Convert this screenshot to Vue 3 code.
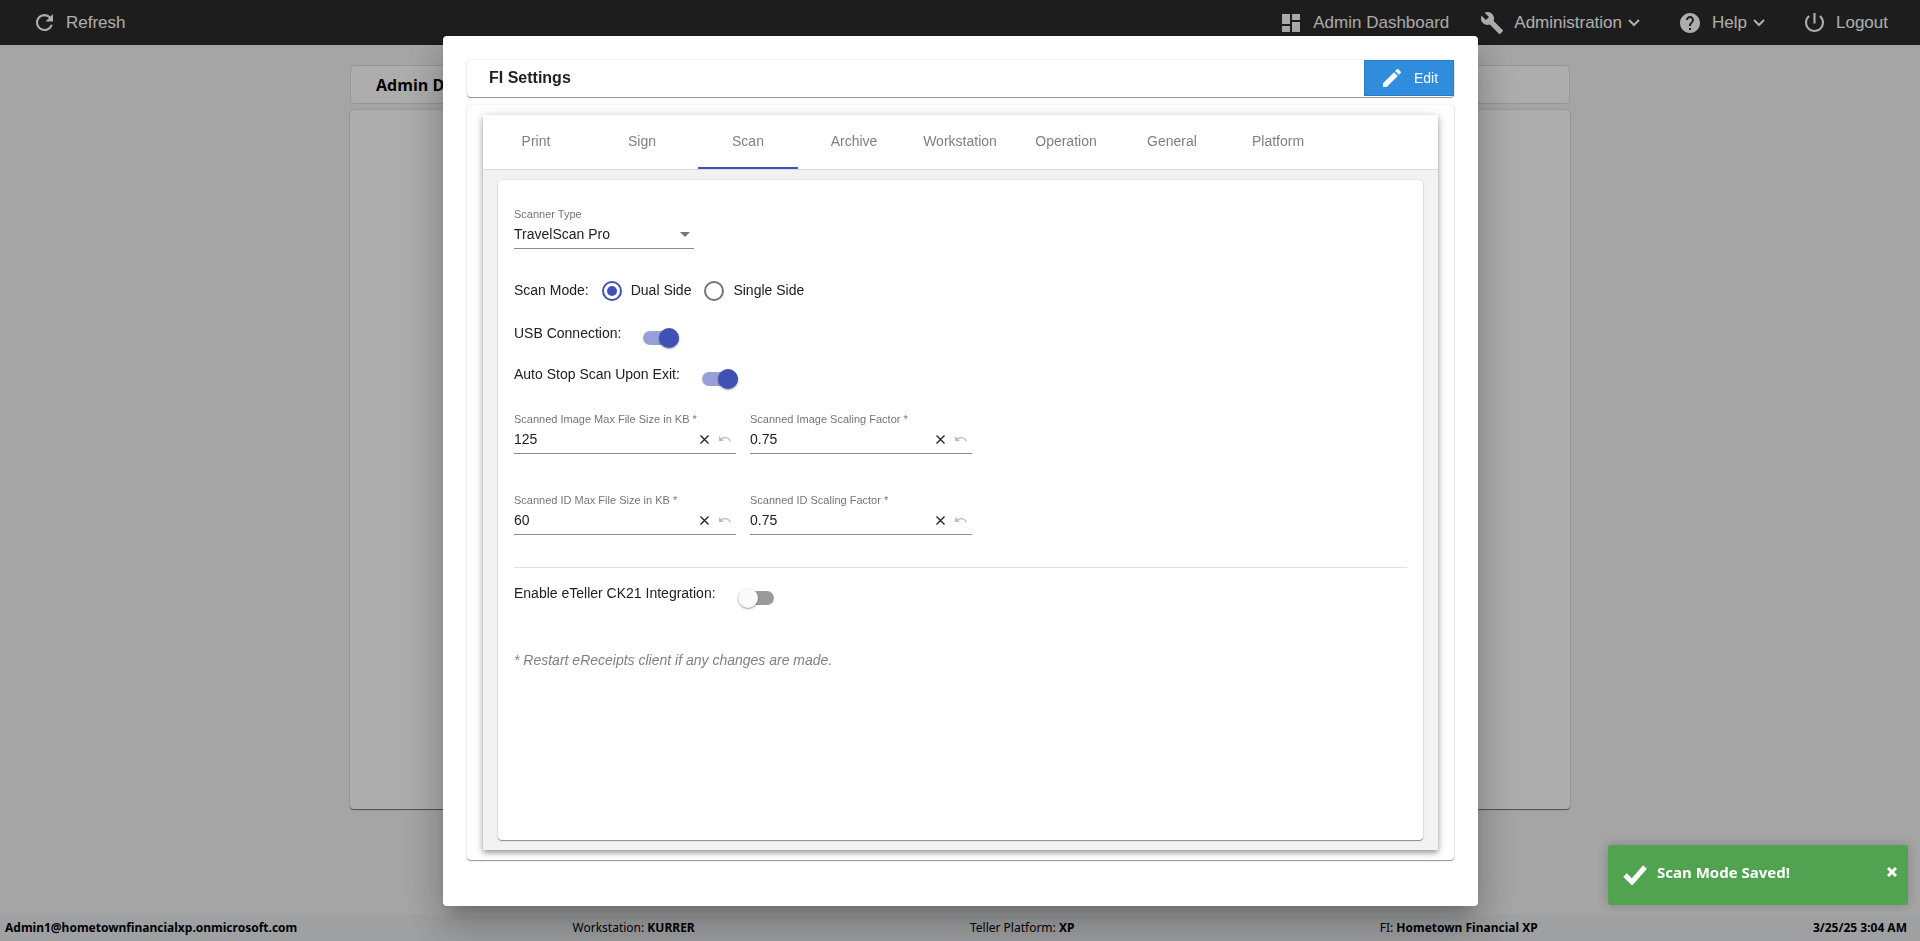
<template>
  <div class="page">
    <header class="topbar">
      <a href="#" class="nav-link">
        <svg class="ico-refresh" viewBox="4 4 16 16"><path d="M17.65 6.35C16.2 4.9 14.21 4 12 4c-4.42 0-7.99 3.58-7.99 8s3.57 8 7.99 8c3.73 0 6.84-2.55 7.73-6h-2.08c-.82 2.33-3.04 4-5.65 4-3.31 0-6-2.69-6-6s2.69-6 6-6c1.66 0 3.14.69 4.22 1.78L13 11h7V4l-2.35 2.35z" /></svg>
        Refresh
      </a>
      <nav class="nav-right">
        <a href="#" class="nav-link dashboard">
          <svg class="ico-dash" viewBox="3 3 18 18"><path d="M3 13h8V3H3v10zm0 8h8v-6H3v6zm10 0h8V11h-8v10zm0-18v6h8V3h-8z" /></svg>
          Admin Dashboard
        </a>
        <a href="#" class="nav-link administration">
          <svg class="ico-wrench" viewBox="1 1 22 22"><path d="M22.7 19l-9.1-9.1c.9-2.3.4-5-1.5-6.9-2-2-5-2.4-7.4-1.3L9 6 6 9 1.6 4.7C.4 7.1.9 10.1 2.9 12.1c1.9 1.9 4.6 2.4 6.9 1.5l9.1 9.1c.4.4 1 .4 1.4 0l2.3-2.3c.5-.4.5-1.1.1-1.4z" /></svg>
          Administration
          <svg class="ico-chevron" viewBox="0 0 12 8"><path d="M1 1l5 5 5-5" /></svg>
        </a>
        <a href="#" class="nav-link help">
          <svg class="ico-help" viewBox="2 2 20 20"><path d="M12 2C6.48 2 2 6.48 2 12s4.48 10 10 10 10-4.48 10-10S17.52 2 12 2zm1 17h-2v-2h2v2zm2.07-7.75l-.9.92C13.45 12.9 13 13.5 13 15h-2v-.5c0-1.1.45-2.1 1.17-2.83l1.24-1.26c.37-.36.59-.86.59-1.41 0-1.1-.9-2-2-2s-2 .9-2 2H8c0-2.21 1.79-4 4-4s4 1.79 4 4c0 .88-.36 1.68-.93 2.25z" /></svg>
          Help
          <svg class="ico-chevron" viewBox="0 0 12 8"><path d="M1 1l5 5 5-5" /></svg>
        </a>
        <a href="#" class="nav-link logout">
          <svg class="ico-power" viewBox="3 3 18 18"><path d="M13 3h-2v10h2V3zm4.83 2.17l-1.42 1.42C17.99 7.86 19 9.81 19 12c0 3.87-3.13 7-7 7s-7-3.13-7-7c0-2.19 1.01-4.14 2.58-5.42L6.17 5.17C4.23 6.82 3 9.26 3 12c0 4.97 4.03 9 9 9s9-4.03 9-9c0-2.74-1.23-5.18-3.17-6.83z" /></svg>
          Logout
        </a>
      </nav>
    </header>

    <main class="content">
      <h1 class="page-title">Admin Dashboard</h1>
      <section class="page-card"></section>
    </main>

    <footer class="statusbar">
      <span><b>Admin1@hometownfinancialxp.onmicrosoft.com</b></span>
      <span>Workstation: <b>KURRER</b></span>
      <span class="platform">Teller Platform: <b>XP</b></span>
      <span>FI: <b>Hometown Financial XP</b></span>
      <span><b>3/25/25 3:04 AM</b></span>
    </footer>

    <div class="backdrop">
      <div class="dialog" role="dialog" aria-labelledby="dialog-title">
        <div class="dialog-head">
          <h2 id="dialog-title">FI Settings</h2>
          <button type="button" class="edit-btn">
            <svg viewBox="3 3 18 18"><path d="M3 17.25V21h3.75L17.81 9.94l-3.75-3.75L3 17.25zM20.71 7.04c.39-.39.39-1.02 0-1.41l-2.34-2.34c-.39-.39-1.02-.39-1.41 0l-1.83 1.83 3.75 3.75 1.83-1.83z" /></svg>
            Edit
          </button>
        </div>

        <div class="dialog-body">
          <div class="tab-group">
            <div class="tabs" role="tablist">
              <button
                v-for="tab in tabs"
                :key="tab"
                type="button"
                role="tab"
                class="tab"
                :class="{ active: tab === activeTab }"
                :aria-selected="tab === activeTab"
                @click="activeTab = tab"
              >{{ tab }}</button>
            </div>

            <div class="tab-content">
              <form class="panel" @submit.prevent>
                <div class="field scanner">
                  <label for="scanner">Scanner Type</label>
                  <div class="control">
                    <select id="scanner" v-model="scanner">
                      <option>TravelScan Pro</option>
                    </select>
                    <svg class="ico-arrow" viewBox="0 0 10 5"><path d="M0 0h10L5 5z" /></svg>
                  </div>
                </div>

                <div class="radio-row" role="radiogroup" aria-labelledby="mode-label">
                  <span id="mode-label" class="row-text">Scan Mode:</span>
                  <div v-for="mode in modes" :key="mode.id" class="radio">
                    <input :id="mode.id" v-model="scanMode" type="radio" name="mode" :value="mode.id">
                    <label :for="mode.id" class="row-text">{{ mode.text }}</label>
                  </div>
                </div>

                <div class="toggle-list">
                  <div class="toggle-row">
                    <label for="usb">USB Connection:</label>
                    <input id="usb" v-model="usb" type="checkbox" role="switch" class="toggle">
                  </div>
                  <div class="toggle-row">
                    <label for="autostop">Auto Stop Scan Upon Exit:</label>
                    <input id="autostop" v-model="autoStop" type="checkbox" role="switch" class="toggle">
                  </div>
                </div>

                <div class="field-grid">
                  <div v-for="f in fields" :key="f.id" class="field">
                    <label :for="f.id">{{ f.label }} *</label>
                    <div class="control">
                      <input :id="f.id" v-model="f.value" type="text">
                      <button type="button" class="icon-btn" aria-label="Clear" @click="f.value = ''">
                        <svg class="ico-clear" viewBox="0 0 9 9"><path d="M.5.5l8 8M8.500.5l-8 8" /></svg>
                      </button>
                      <button type="button" class="icon-btn undo" aria-label="Undo" disabled>
                        <svg class="ico-undo" viewBox="0 0 12 6"><path d="M0 0v5h5L3.200 3.300C5.800 1.400 9 2 10.800 5.600L12 5C10 .7 5.500-.2 2.200 2.200z" /></svg>
                      </button>
                    </div>
                  </div>
                </div>

                <hr>

                <div class="toggle-row">
                  <label for="eteller">Enable eTeller CK21 Integration:</label>
                  <input id="eteller" v-model="eTeller" type="checkbox" role="switch" class="toggle">
                </div>

                <p class="note">* Restart eReceipts client if any changes are made.</p>
              </form>
            </div>
          </div>
        </div>
      </div>
    </div>

    <div v-if="toast" class="toast" role="alert">
      <svg class="ico-check" viewBox="0 0 24 20"><path d="M2 10l7 7L22 2" /></svg>
      <span>Scan Mode Saved!</span>
      <button type="button" class="toast-close" aria-label="Close" @click="toast = false">
        <svg viewBox="0 0 10 10"><path d="M1 1l8 8M9 1l-8 8" /></svg>
      </button>
    </div>
  </div>
</template>

<script setup>
import { ref } from 'vue';

const tabs = ['Print', 'Sign', 'Scan', 'Archive', 'Workstation', 'Operation', 'General', 'Platform'];
const activeTab = ref('Scan');

const modes = [
  { id: 'dual', text: 'Dual Side' },
  { id: 'single', text: 'Single Side' }
];

const scanner = ref('TravelScan Pro');
const scanMode = ref('dual');
const usb = ref(true);
const autoStop = ref(true);
const eTeller = ref(false);
const toast = ref(true);

const fields = ref([
  { id: 'img-size', label: 'Scanned Image Max File Size in KB', value: '125' },
  { id: 'img-scale', label: 'Scanned Image Scaling Factor', value: '0.75' },
  { id: 'id-size', label: 'Scanned ID Max File Size in KB', value: '60' },
  { id: 'id-scale', label: 'Scanned ID Scaling Factor', value: '0.75' }
]);
</script>

<style>
body { margin: 0; background: #f3f3f3; }
</style>

<style scoped>
* { box-sizing: border-box; }
svg { flex: none; fill: currentColor; }
button, input, select { font: inherit; color: inherit; margin: 0; padding: 0; border: none; background: none; }
button { cursor: pointer; }
.page {
  display: flex; flex-direction: column; height: 100vh; overflow: hidden;
  font-family: "Liberation Sans", Arial, sans-serif; font-size: 14px; line-height: 20px; color: #212121;
}

/* Top bar */
.topbar { display: flex; justify-content: space-between; align-items: center; height: 45px; padding: 0 32px 0 36px; background: #2c2c2c; font-size: 17px; }
.nav-link { display: flex; align-items: center; color: white; text-decoration: none; }
.nav-right { display: flex; }
.administration { margin-left: 32px; }
.help, .logout { margin-left: 40px; }
.ico-refresh { width: 17px; height: 17px; margin-right: 13px; }
.ico-dash { width: 20px; height: 18px; margin-right: 12px; }
.ico-wrench { width: 22px; height: 22px; margin-right: 11px; }
.ico-help { width: 20px; height: 20px; margin-right: 12px; }
.ico-power { width: 19px; height: 19px; margin-right: 12px; }
.ico-chevron { width: 12px; height: 8px; margin-left: 6px; fill: none; stroke: currentColor; stroke-width: 2; }

/* Page behind the dialog */
.content { flex: 1; display: flex; flex-direction: column; gap: 6px; width: 100%; max-width: 1220px; margin: 0 auto; padding: 20px 0 106px; }
.page-title {
  margin: 0; padding: 1px 25px 0; border: 1px solid #dedede; border-radius: 4px; background: white;
  font: bold 16px/36px "Open Sans", "Noto Sans", sans-serif; color: black;
}
.page-card { flex: 1; background: white; border-radius: 4px; box-shadow: 0 1px 1px rgba(0,0,0,.5), 0 0 2px rgba(0,0,0,.2); }
.statusbar {
  display: flex; justify-content: space-between; height: 26px; padding: 0 13px 0 5px; background: #e9ecef;
  font: 12px/26px "Noto Sans", "Open Sans", sans-serif; color: black; white-space: nowrap;
}
.platform { padding-right: 30px; }

/* Dialog */
.backdrop { position: fixed; inset: 0; display: flex; justify-content: center; padding: 36px 16px 35px 17px; background: rgba(0,0,0,.32); }
.dialog {
  display: flex; flex-direction: column; gap: 8px; width: 100%; max-width: 1035px; padding: 24px 24px 46px; background: white; border-radius: 4px;
  box-shadow: 0 11px 15px -7px rgba(0,0,0,.2), 0 24px 38px 3px rgba(0,0,0,.14), 0 9px 46px 8px rgba(0,0,0,.12);
}
.dialog-head, .dialog-body, .panel { border-radius: 4px; background: white; box-shadow: 0 1px 1px rgba(0,0,0,.4), 0 0 2px rgba(0,0,0,.16); }
.dialog-head { display: flex; justify-content: space-between; height: 37px; padding-left: 22px; }
.dialog-head h2 { margin: 0; font-size: 16px; line-height: 36px; }
.edit-btn { display: flex; align-items: center; gap: 13px; width: 90px; height: 36px; padding-left: 18px; background: #308cdd; border: 1px solid #2a7cc4; color: white; }
.edit-btn svg { width: 18px; height: 18px; }
.dialog-body { flex: 1; display: flex; padding: 10px 16px; }
.tab-group { flex: 1; display: flex; flex-direction: column; box-shadow: 0 3px 5px rgba(0,0,0,.3), 0 1px 10px rgba(0,0,0,.16); }
.tabs { display: flex; gap: 6px; height: 55px; padding: 0 3px; background: white; border-bottom: 1px solid #dcdcdc; }
.tab { width: 100px; border-bottom: 2px solid transparent; color: #808080; }
.tab.active { border-color: #3f51b5; }
.tab-content { flex: 1; display: flex; padding: 10px 15px; background: #f2f2f2; }
.panel { flex: 1; padding: 27px 16px; }

/* Form */
.field { width: 222px; border-bottom: 1px solid #8c8c8c; }
.field.scanner { width: 180px; }
.field label { display: block; margin-bottom: 3px; font-size: 11px; line-height: 14px; color: #757575; white-space: nowrap; }
.control { display: flex; align-items: center; height: 24px; padding-bottom: 4px; }
.control select { appearance: none; flex: 1; height: 20px; }
.control input { flex: 1; min-width: 0; height: 20px; outline: none; }
.ico-arrow { width: 10px; height: 5px; margin-right: 4px; color: #757575; }
.icon-btn { display: flex; padding: 0 5px; }
.icon-btn.undo { color: #bdbdbd; }
.ico-clear { width: 9px; height: 9px; stroke: currentColor; stroke-width: 1.3; }
.ico-undo { width: 12px; height: 6px; }
.radio-row { display: flex; align-items: center; gap: 13px; margin: 32px 0 22px; }
.row-text { padding-bottom: 2px; line-height: 18px; }
.radio { display: flex; align-items: center; gap: 9px; }
.radio input { appearance: none; display: grid; place-items: center; width: 20px; height: 20px; border: 2px solid #757575; border-radius: 50%; }
.radio input:checked { border-color: #3f51b5; }
.radio input:checked::before { content: ""; width: 10px; height: 10px; border-radius: 50%; background: #3f51b5; }
.toggle-list { display: grid; gap: 16px; }
.toggle-row { display: flex; gap: 22px; height: 25px; }
.toggle { appearance: none; align-self: flex-end; display: flex; align-items: center; width: 36px; height: 14px; margin-bottom: 3px; border-radius: 7px; background: #9a9a9a; cursor: pointer; }
.toggle::before { content: ""; flex: none; width: 20px; height: 20px; border-radius: 50%; background: #fafafa; box-shadow: 0 1px 2px rgba(0,0,0,.4); }
.toggle:checked { background: #989fd9; }
.toggle:checked::before { margin-left: 16px; background: #3f51b5; }
.field-grid { display: grid; grid-template-columns: 222px 222px; gap: 39px 14px; margin-top: 23px; }
hr { margin: 32px 0 15px; border: none; border-top: 1px solid #e0e0e0; }
.note { margin: 42px 0 0; font-style: italic; color: #808080; }

/* Toast */
.toast {
  position: fixed; right: 12px; bottom: 36px; display: flex; align-items: flex-start; width: 300px; height: 60px; padding: 17px 11px 0 15px;
  border-radius: 3px; background: #51a351; box-shadow: 0 0 12px rgba(0,0,0,.2); color: white; font: bold 15px/20px "Noto Sans", "Open Sans", sans-serif;
}
.toast span { flex: 1; margin-left: 10px; }
.ico-check { width: 24px; height: 20px; margin-top: 3px; fill: none; stroke: white; stroke-width: 5; }
.toast-close { display: flex; padding-top: 5px; }
.toast-close svg { width: 10px; height: 10px; stroke: white; stroke-width: 3; }
</style>
